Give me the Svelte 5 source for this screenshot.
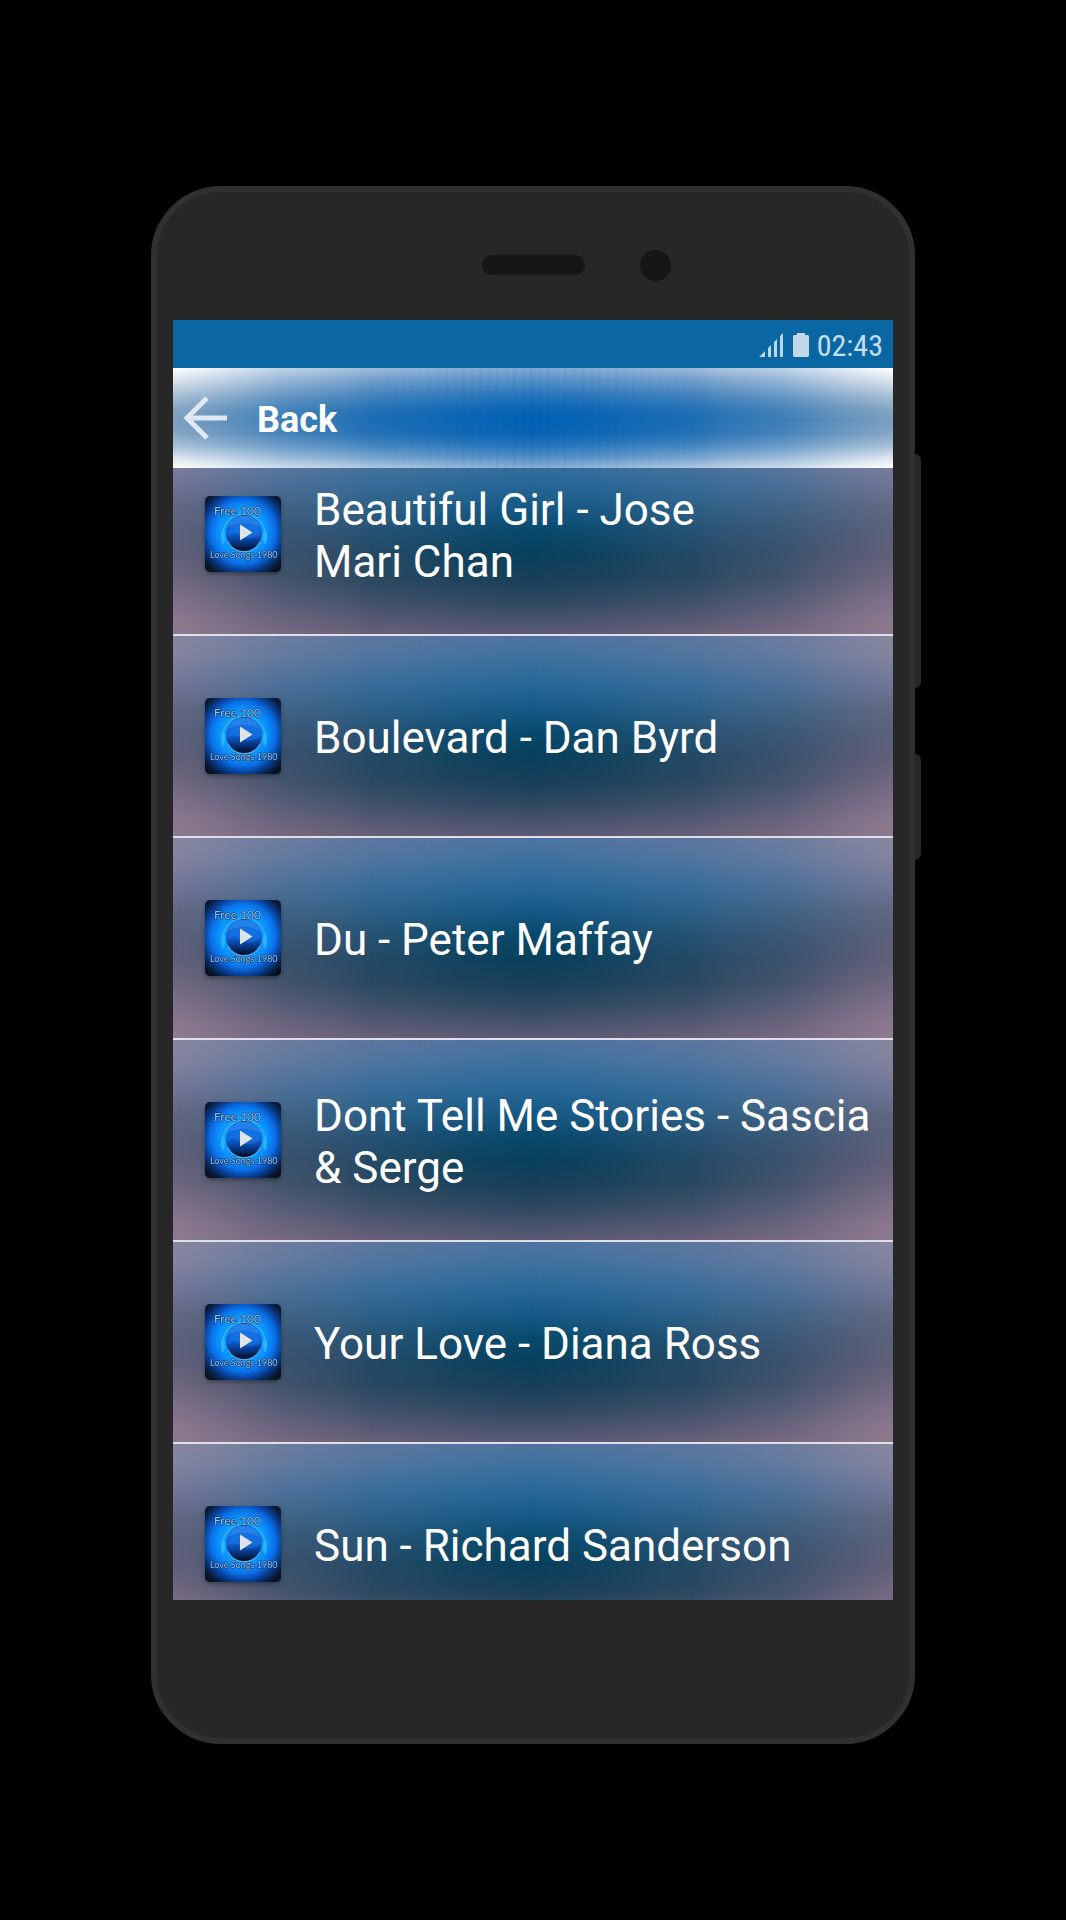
<script lang="ts">
  type Song = { title: string };

  const songs: Song[] = [
    { title: "Beautiful Girl - Jose\nMari Chan" },
    { title: "Boulevard - Dan Byrd" },
    { title: "Du - Peter Maffay" },
    { title: "Dont Tell Me Stories - Sascia\n& Serge" },
    { title: "Your Love - Diana Ross" },
    { title: "Sun - Richard Sanderson" },
  ];
</script>

{#snippet cover()}
  <svg class="cover" viewBox="0 0 76 76" aria-hidden="true">
    <defs>
      <radialGradient id="glow" cx="50%" cy="47%" r="68%">
        <stop offset="0" stop-color="#18b4ff" />
        <stop offset=".46" stop-color="#0a94ff" />
        <stop offset=".62" stop-color="#0a70e8" />
        <stop offset=".76" stop-color="#083f96" />
        <stop offset=".9" stop-color="#081c3c" />
        <stop offset="1" stop-color="#070f1a" />
      </radialGradient>
      <linearGradient id="ball" x1="0" y1="0" x2="0" y2="1">
        <stop offset="0" stop-color="#1474e8" />
        <stop offset=".5" stop-color="#0b62d4" />
        <stop offset=".75" stop-color="#07388a" />
        <stop offset="1" stop-color="#020c24" />
      </linearGradient>
    </defs>
    <rect width="76" height="76" rx="5" fill="url(#glow)" />
    <ellipse cx="18" cy="41" rx="2" ry="7" fill="#48d4e8" opacity=".5" />
    <ellipse cx="60" cy="41" rx="2" ry="7" fill="#48d4e8" opacity=".5" />
    <path d="M18 35Q22 19 39 18Q56 19 60 35" fill="none" stroke="#4bbcdc" stroke-width="1.5" opacity=".6" />
    <circle cx="39" cy="37" r="18" fill="url(#ball)" />
    <path d="M23 45A18 18 0 0 0 55 45" fill="none" stroke="#5cb0dc" stroke-width="1" transform="translate(0 1)" />
    <path d="M22 32Q39 22 56 32Q51 20 39 20Q27 20 22 32Z" fill="#3c94f4" opacity=".45" />
    <path d="M22 40Q28 34 36 40T56 38Q54 28 39 28Q24 28 22 40Z" fill="#1f7ff0" opacity=".4" />
    <path d="M35 28.500L47.500 36.500L35 44.500Z" fill="#dfe3ec" />
    <text x="9" y="19" class="cover-text">Free 100</text>
    <text x="5" y="62" class="cover-text cover-text--small">Love Songs 1980</text>
  </svg>
{/snippet}

<main class="stage">
  <div class="phone">
    <div class="sensors">
      <span class="speaker"></span>
      <span class="camera"></span>
    </div>

    <div class="screen">
      <div class="status">
        <svg width="26" height="24" viewBox="0 0 26 24" aria-hidden="true">
          <path d="M0 24L6 18V24ZM9 15L12 12V24H9ZM15 9L18 6V24H15ZM21 3L24 0V24H21Z" fill="#b9d6ea" />
        </svg>
        <svg width="16" height="24" viewBox="0 0 16 24" aria-hidden="true">
          <path d="M4 0H12V2H15L16 3V23L15 24H1L0 23V3L1 2H4Z" fill="#c3d9e8" />
        </svg>
        <time>02:43</time>
      </div>

      <header class="bar">
        <button class="back" type="button">
          <svg width="44" height="44" viewBox="0 0 44 44" aria-hidden="true">
            <path d="M24 2L4 22L24 42M4 22H44" fill="none" stroke="#dfe9f4" stroke-width="5" />
          </svg>
          <span class="label">Back</span>
        </button>
      </header>

      <div class="viewport">
        <ul class="songs">
          {#each songs as song}
            <li>
              <a class="song" href="#play">
                {@render cover()}
                <span class="label title">{song.title}</span>
              </a>
            </li>
          {/each}
        </ul>
      </div>
    </div>

    <span class="key key--volume"></span>
    <span class="key key--power"></span>
  </div>
</main>

<style>
  :global(body) {
    background: #000;
  }

  .stage {
    display: flex;
    justify-content: center;
    box-sizing: border-box;
    min-height: 100vh;
    padding: 186px 24px 176px;
    font-family: Roboto, sans-serif;
    color: #fff;
  }

  .phone {
    position: relative;
    box-sizing: border-box;
    width: 100%;
    max-width: 764px;
    padding: 0 16px 137px;
    background: #272727;
    border: 6px solid #303030;
    border-radius: 70px;
  }

  .sensors {
    display: grid;
    grid-template-columns: 1fr auto 1fr;
    align-items: center;
    column-gap: 55px;
    height: 128px;
    box-sizing: border-box;
    padding-top: 18px;
  }
  .speaker {
    grid-column: 2;
    width: 103px;
    height: 20px;
    border-radius: 10px;
    background: #161616;
  }
  .camera {
    width: 31px;
    height: 31px;
    border-radius: 50%;
    background: #161616;
  }

  .key {
    position: absolute;
    left: calc(100% + 6px);
    width: 6px;
    background: #272727;
    border-radius: 0 6px 6px 0;
  }
  .key--volume {
    top: 262px;
    height: 234px;
  }
  .key--power {
    top: 562px;
    height: 106px;
  }

  .screen {
    display: flex;
    flex-direction: column;
    aspect-ratio: 9 / 16;
    overflow: hidden;
  }

  .status {
    display: flex;
    align-items: center;
    justify-content: flex-end;
    gap: 8px;
    height: 48px;
    padding: 2px 10px 0 0;
    box-sizing: border-box;
    background: #0a67a4;
    color: #c3def0;
    font-family: "Roboto Condensed", Roboto, sans-serif;
    font-size: 30px;
  }

  .bar,
  .song {
    position: relative;
    isolation: isolate;
  }
  .bar::before,
  .bar::after,
  .song::before,
  .song::after {
    content: "";
    position: absolute;
    inset: 0;
    z-index: -1;
  }

  /* centre, quarter and edge columns, blended sideways by the masks */
  .bar {
    flex: none;
    height: 100px;
    background:
      repeating-linear-gradient(90deg, rgb(0 70 130 / 8%) 0 1px, transparent 4px 8px, rgb(0 70 130 / 5%) 10px, transparent 13px 17px),
      linear-gradient(#80aad2, #5590c8 12%, #2474bc 28%, #0864b6 42%, #0062b6 52%, #0864b6 66%, #2474bc 78%, #5590c8 90%, #88b0d6);
  }
  .bar::before {
    background: linear-gradient(#a2bedb, #749fca 12%, #4583bd 28%, #2672b6 42%, #1f6fb4 52%, #2873b6 66%, #4a88c0 78%, #7ca8d0 90%, #b4cbe2);
  }
  .bar::after {
    background: linear-gradient(#fff, #dde5ed 12%, #a9bfd3 28%, #86a5c2 42%, #7c9fc0 52%, #88a8c5 66%, #a9c1d7 78%, #dde6ef 90%, #fff);
  }

  .bar::before,
  .song::before {
    mask-image: linear-gradient(90deg, #000 24%, rgb(0 0 0 / 72%) 32%, rgb(0 0 0 / 28%) 41%, transparent 50%, rgb(0 0 0 / 28%) 59%, rgb(0 0 0 / 72%) 68%, #000 76%);
  }
  .bar::after,
  .song::after {
    mask-image: linear-gradient(90deg, #000, rgb(0 0 0 / 76%) 6%, rgb(0 0 0 / 34%) 15%, transparent 28%, transparent 72%, rgb(0 0 0 / 34%) 85%, rgb(0 0 0 / 76%) 94%, #000);
  }

  .back {
    display: flex;
    align-items: center;
    gap: 30px;
    height: 100%;
    padding: 1px 10px;
    border: 0;
    background: none;
    color: #fff;
    font: 700 36px Roboto, sans-serif;
  }

  .label {
    padding-top: 4px;
  }

  .viewport {
    flex: 1;
    min-height: 0;
    overflow: hidden;
  }
  .songs {
    margin: -34px 0 0;
    padding: 0;
    list-style: none;
  }
  .songs li {
    border-bottom: 2px solid #dedfe8;
  }

  .song {
    display: flex;
    align-items: center;
    gap: 33px;
    min-height: 200px;
    padding-left: 32px;
    color: inherit;
    text-decoration: none;
    background: linear-gradient(#4f73a0, #3f729f 10%, #286898 24%, #165a88 36%, #084a6e 48%, #07405c 60%, #183f5a 72%, #2c475f 83%, #46526c 92%, #5c5a76);
  }
  .song::before {
    background: linear-gradient(#5e769f, #53769f 10%, #3a6d9a 24%, #306288 36%, #2a5476 48%, #274b67 60%, #2c4a62 72%, #40526a 83%, #575973 92%, #6a6079);
  }
  .song::after {
    background: linear-gradient(#88879f, #83839e 10%, #727696 24%, #636882 36%, #5c617a 48%, #615f79 60%, #70677f 72%, #81718a 83%, #8b788e 92%, #8e7b90);
  }

  .cover {
    flex: none;
    width: 76px;
    height: 76px;
    filter: drop-shadow(0 2px 2px rgb(0 0 0 / 35%));
  }
  .cover-text {
    font: 12px Lato, sans-serif;
    fill: #93c0e8;
    stroke: #0a2c5c;
    stroke-width: 1px;
    paint-order: stroke;
  }
  .cover-text--small {
    font-size: 9px;
  }

  .title {
    font-size: 44px;
    line-height: 52px;
    white-space: pre-line;
  }
</style>
